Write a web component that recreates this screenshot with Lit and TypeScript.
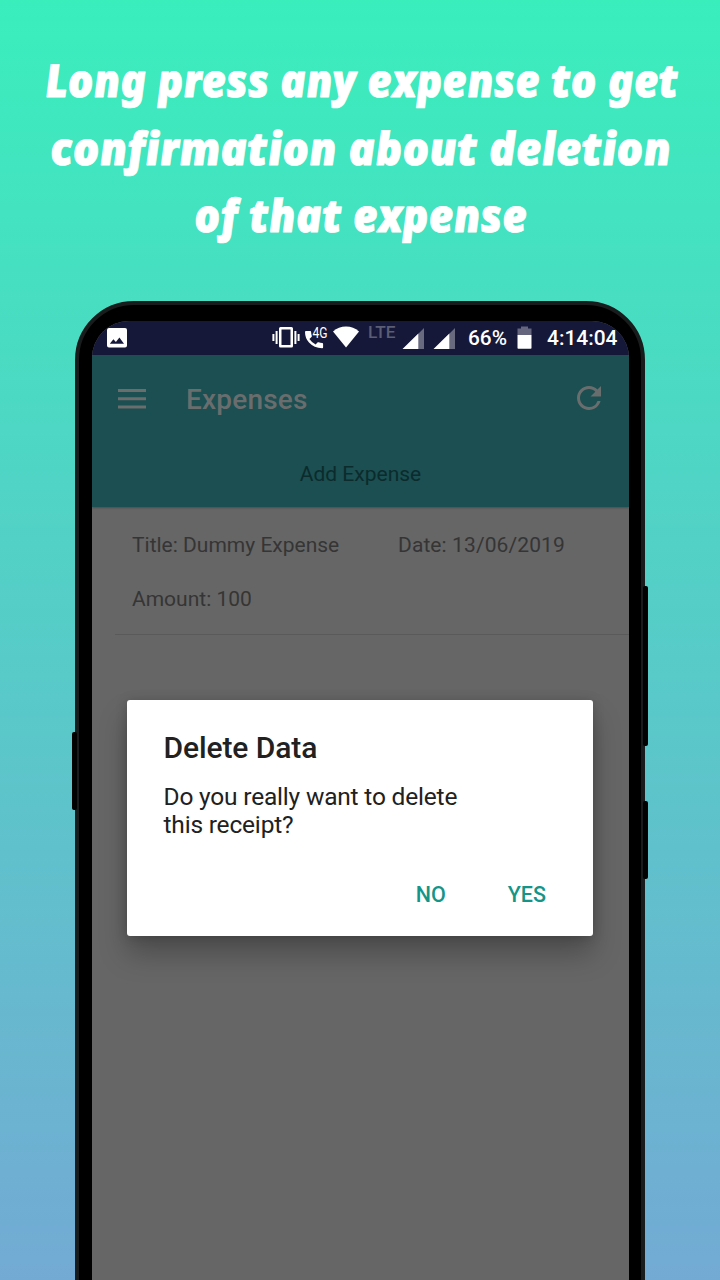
import { LitElement, html, css } from "lit";
import { customElement } from "lit/decorators.js";

@customElement("status-bar")
class StatusBar extends LitElement {
  static styles = css`
    :host { display: block; height: 34px; background: #151839; color: #fff; }
    svg { display: block; width: 537px; height: 34px; }
    text { font-family: Roboto, sans-serif; fill: #fff; }
    .pct, .clock { font-size: 20.5px; font-weight: 500; }
    .lte { font-size: 16.5px; font-weight: 500; fill: #5b5d75; }
    .g4 { font-size: 14px; }
  `;
  render() {
    return html`
      <svg viewBox="92 321 537 34" fill="#fff">
        <path fill-rule="evenodd" d="M109 328h16a2 2 0 0 1 2 2v15.5a2 2 0 0 1-2 2h-16a2 2 0 0 1-2-2V330a2 2 0 0 1 2-2zM109.800 343.700h14.200l-4.600-6.100-3.500 4.500-2.500-2.900z"/>
        <path fill-rule="evenodd" d="M280.500 327h11a1.500 1.500 0 0 1 1.500 1.500v17.500a1.500 1.500 0 0 1-1.500 1.500h-11a1.500 1.500 0 0 1-1.500-1.500v-17.500a1.500 1.500 0 0 1 1.500-1.500zM281.500 329.500v15.600h9V329.500z"/>
        <path d="M275.600 331h2v13h-2zM272.400 334h2v7h-2zM294.400 331h2v13h-2zM297.600 334h2v7h-2z"/>
        <path d="M306 331h4.200q.8 0 .9.900.1 2 .7 3.900.2.700-.3 1.200l-2.100 2.100q2.400 3.700 6.300 5.300l1.700-1.800q.5-.5 1.200-.3 1.800.6 3.600.7.900.1.900.9v3.400q0 .9-.9.900Q314 348 309 342.500 305 338 305 331.900q0-.9 1-.9z"/>
        <text class="g4" x="312.500" y="337.700" textLength="15" lengthAdjust="spacingAndGlyphs">4G</text>
        <path d="M346 347.500L333 331.500Q338.500 326.500 346 326.500T359 331.500z"/>
        <text class="lte" x="368" y="338" textLength="27.500" lengthAdjust="spacingAndGlyphs">LTE</text>
        <path fill="#686a80" d="M418 334l6-6v21h-6zM449 334l6-6v21h-6z"/>
        <path d="M402.500 349l15.800-15.500V349zM433.500 349l15.800-15.500V349z"/>
        <text class="pct" x="468" y="345.300" textLength="39" lengthAdjust="spacingAndGlyphs">66%</text>
        <path fill="#65667e" d="M521 326.500h7v2h3.500V335h-14v-6.500h3.500z"/>
        <path d="M517.500 335h14v13a.8.8 0 0 1-.8.8h-12.400a.8.8 0 0 1-.8-.8z"/>
        <text class="clock" x="547" y="345.300" textLength="70.500" lengthAdjust="spacingAndGlyphs">4:14:04</text>
      </svg>`;
  }
}

@customElement("expense-screen")
class ExpenseScreen extends LitElement {
  static styles = css`
    :host { display: block; font-family: Roboto, sans-serif; }
    .head { height: 152px; background: #1b4f51; box-sizing: border-box; box-shadow: 0 1px 2px rgba(0,0,0,.25); position: relative; }
    .bar { display: flex; align-items: center; height: 88px; padding: 0 28px 0 26px; color: #6a6d6d; }
    .bar svg { display: block; }
    .reload { margin-bottom: 2px; }
    .name { font-size: 28px; font-weight: 500; letter-spacing: .2px; margin-left: 40px; flex: 1; }
    .add { text-align: center; font-size: 21px; line-height: 26px; padding-top: 18px; color: #0c2b2d; }
    .item { margin-left: 23px; padding: 25px 0 0 17px; height: 128px; box-sizing: border-box; border-bottom: 1px solid #5a5a5a; color: #353535; font-size: 21px; line-height: 26px; }
    .row { display: grid; grid-template-columns: 266px 1fr; margin-bottom: 28px; }
    .date { letter-spacing: .1px; }
  `;
  render() {
    return html`
      <div class="head">
        <div class="bar">
          <svg width="28" height="20" viewBox="0 0 28 20" fill="currentColor"><path d="M0 0h28v3H0zM0 8.300h28v3H0zM0 16.500h28v3H0z"/></svg>
          <div class="name">Expenses</div>
          <svg class="reload" width="24" height="24" viewBox="4 4 16 16" fill="currentColor"><path d="M17.650 6.350A7.958 7.958 0 0 0 12 4c-4.420 0-7.990 3.580-7.990 8s3.570 8 7.990 8c3.730 0 6.840-2.550 7.730-6h-2.080A5.990 5.990 0 0 1 12 18c-3.310 0-6-2.690-6-6s2.690-6 6-6c1.660 0 3.140.69 4.220 1.780L13 11h7V4l-2.350 2.350z"/></svg>
        </div>
        <div class="add">Add Expense</div>
      </div>
      <div class="item">
        <div class="row"><span>Title: Dummy Expense</span><span class="date">Date: 13/06/2019</span></div>
        <div>Amount: 100</div>
      </div>`;
  }
}

@customElement("confirm-dialog")
class ConfirmDialog extends LitElement {
  static styles = css`
    :host { display: block; box-sizing: border-box; width: 466px; height: 236px; padding: 30px 36px 0; background: #fff; border-radius: 3px; box-shadow: 0 18px 28px rgba(0,0,0,.26), 0 1px 12px rgba(0,0,0,.18); font-family: Roboto, sans-serif; color: #212121; }
    .title { font-size: 30px; line-height: 36px; font-weight: 500; letter-spacing: -.1px; padding-left: .5px; }
    .text { font-size: 24.500px; line-height: 28px; letter-spacing: -.19px; margin-top: 17px; width: 320px; padding-left: .5px; }
    .actions { display: flex; justify-content: flex-end; gap: 62px; margin-top: 43px; padding-right: 11px; font-size: 21.500px; line-height: 26px; font-weight: 500; color: #159588; }
  `;
  render() {
    return html`
      <div class="title">Delete Data</div>
      <div class="text">Do you really want to delete this receipt?</div>
      <div class="actions"><span>NO</span><span>YES</span></div>`;
  }
}

@customElement("app-root")
class AppRoot extends LitElement {
  static styles = css`
    :host { display: block; position: relative; width: 720px; height: 1280px; overflow: hidden; background: linear-gradient(#3aeebc, #73aad4); }
    .headline { display: block; width: 720px; height: 301px; overflow: visible; }
    .headline text { font-family: "Noto Sans", sans-serif; font-weight: 900; font-style: italic; font-size: 40px; fill: #fff; stroke: #fff; stroke-width: .7px; stroke-linejoin: round; }
    .phone { width: 570px; height: 1100px; margin-left: 75px; box-sizing: border-box; background: #000; border: 4px solid #191c1c; border-radius: 59px; padding: 16px 12px 0 13px; }
    .screen { width: 537px; height: 1060px; border-radius: 37px; overflow: hidden; background: #666; }
    .key { position: absolute; width: 5px; background: #020202; border-radius: 2px; }
    .left { left: 72px; top: 732px; height: 78px; }
    .volume { left: 643px; top: 586px; height: 160px; }
    .power { left: 643px; top: 801px; height: 78px; }
    confirm-dialog { position: absolute; left: 127px; top: 699.500px; }
  `;
  render() {
    return html`
      <svg class="headline" viewBox="0 0 720 301">
        <g transform="translate(46 96.500) skewX(4) scale(1 1.140)"><text textLength="633" lengthAdjust="spacingAndGlyphs">Long press any expense to get</text></g>
        <g transform="translate(51 164.500) skewX(4) scale(1 1.140)"><text textLength="621" lengthAdjust="spacingAndGlyphs">confirmation about deletion</text></g>
        <g transform="translate(195 231.500) skewX(4) scale(1 1.140)"><text textLength="333" lengthAdjust="spacingAndGlyphs">of that expense</text></g>
      </svg>
      <div class="phone"><div class="screen">
        <status-bar></status-bar>
        <expense-screen></expense-screen>
      </div></div>
      <div class="key left"></div><div class="key volume"></div><div class="key power"></div>
      <confirm-dialog></confirm-dialog>`;
  }
}
